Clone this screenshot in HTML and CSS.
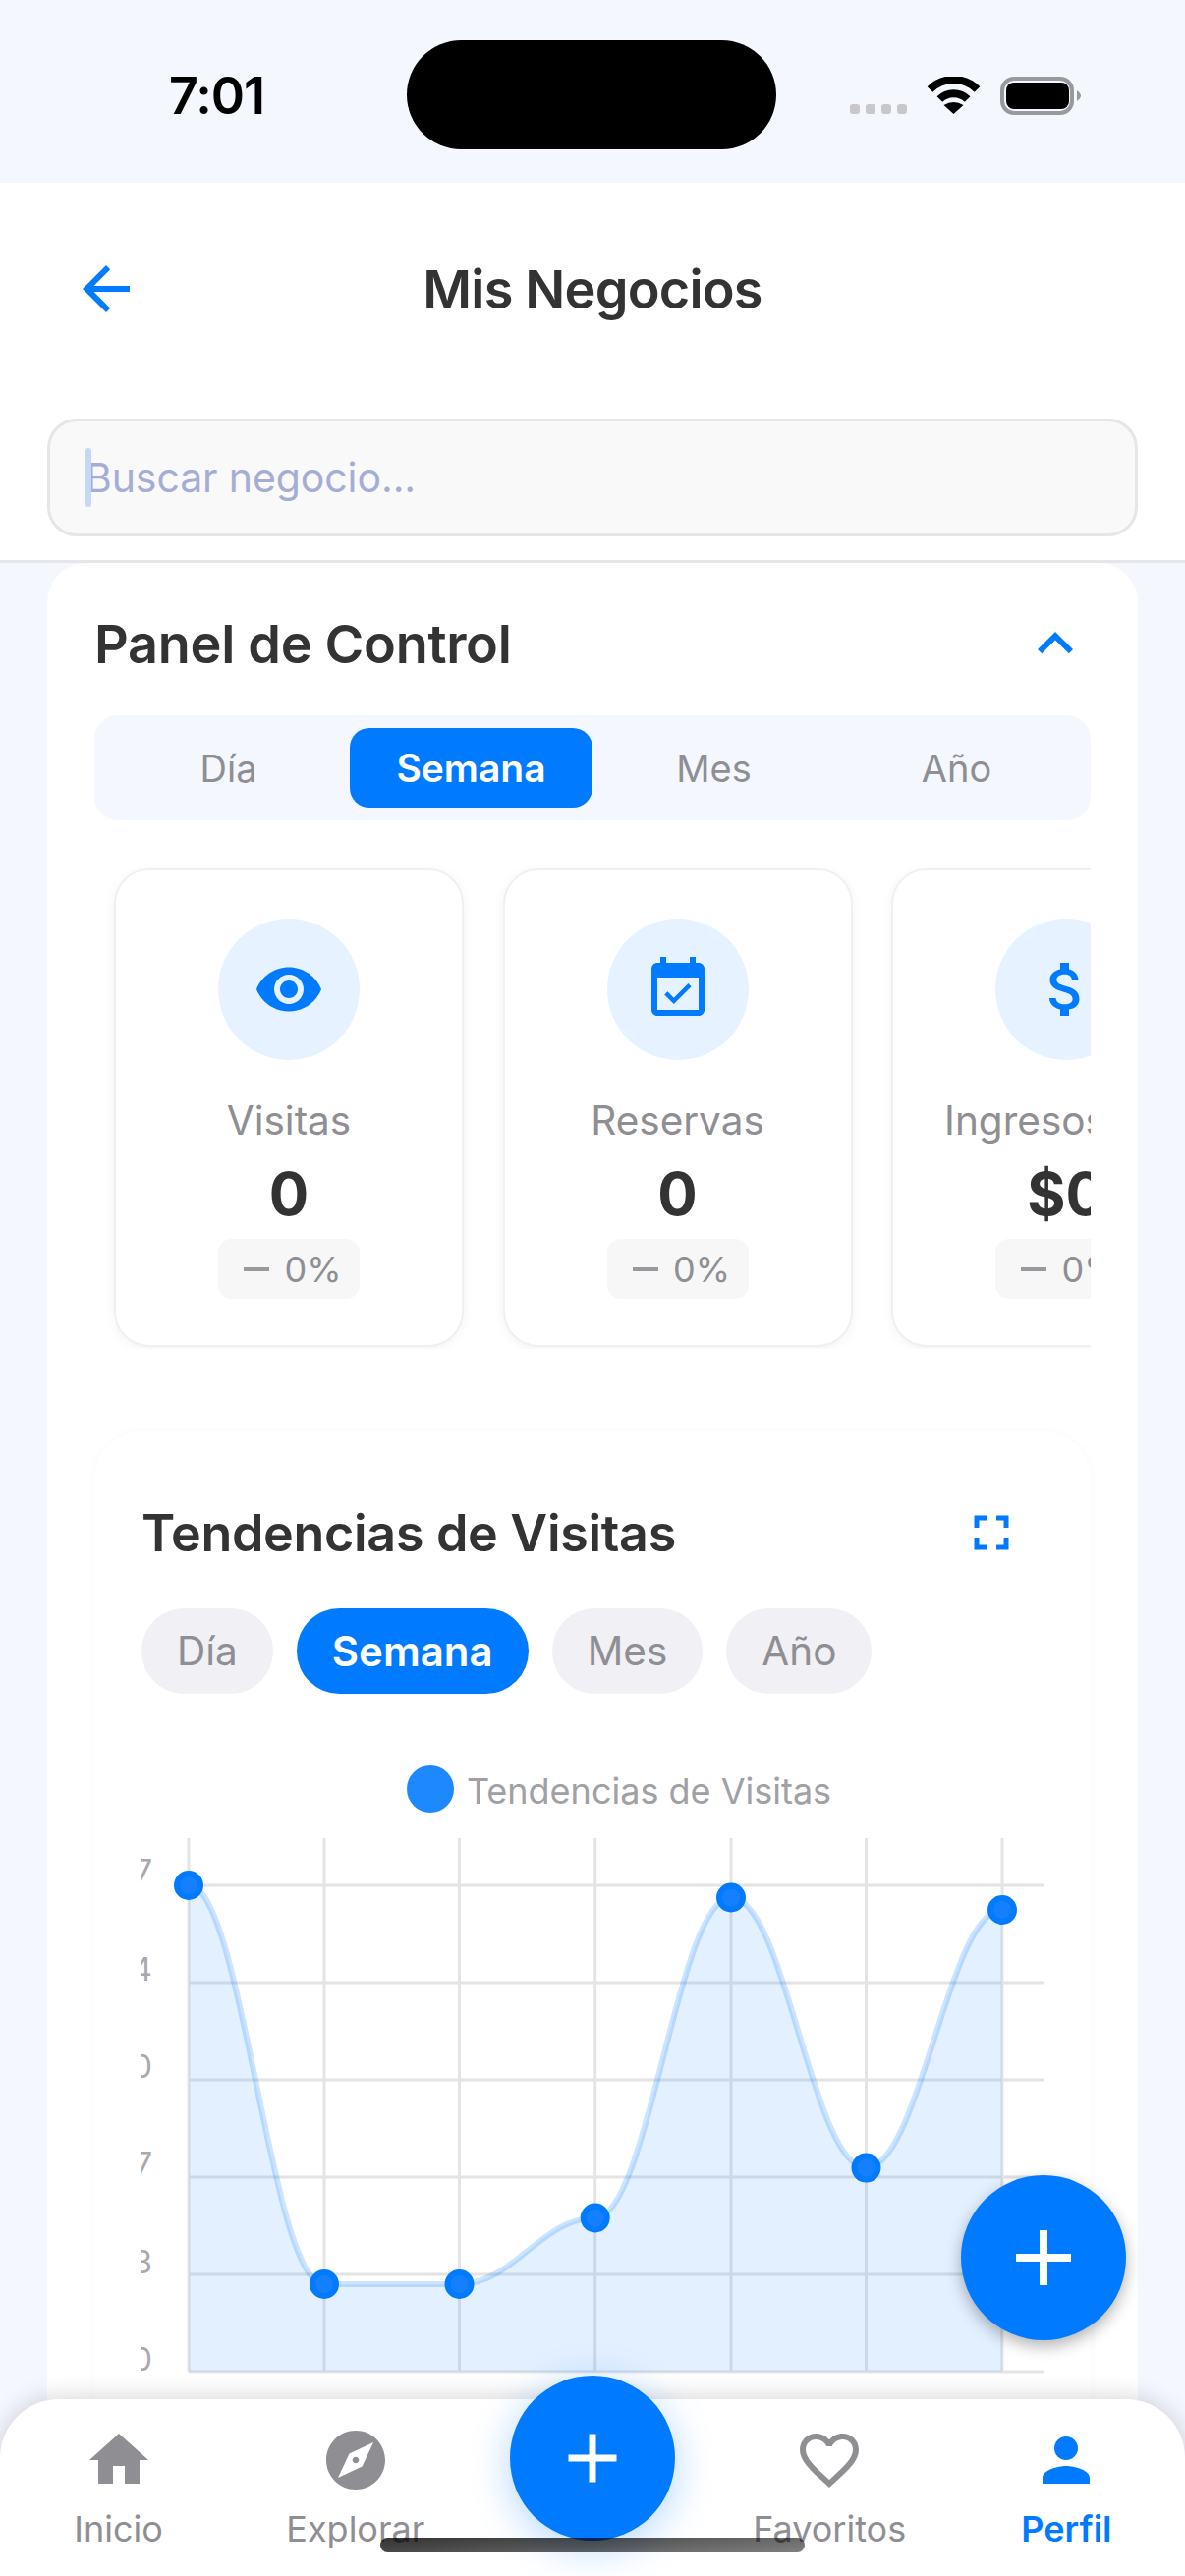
FILE: index.html
```html
<!DOCTYPE html>
<html lang="es">
<head>
<meta charset="utf-8">
<title>Mis Negocios</title>
<link rel="stylesheet" href="styles.css">
</head>
<body>
<div class="screen">
  <div class="status">
    <div class="time">7:01</div>
    <div class="island"></div>
    <svg class="status-icons" width="236" height="40" viewBox="0 0 236 40">
      <g fill="#C7C7CC"><rect x="0" y="28" width="10" height="10" rx="3"/><rect x="16" y="28" width="10" height="10" rx="3"/><rect x="32" y="28" width="10" height="10" rx="3"/><rect x="48" y="28" width="10" height="10" rx="3"/></g>
      <g fill="none" stroke="#000" stroke-width="8"><path d="M81.500 13A34 34 0 0 1 129.500 13"/><path d="M91.400 23A20 20 0 0 1 119.600 23"/></g>
      <path d="M105.500 38L95.500 29Q105.500 23 115.500 29Z"/>
      <rect x="155" y="2" width="71" height="35" rx="12" fill="none" stroke="#98989F" stroke-width="4"/>
      <rect x="159" y="6" width="64" height="27" rx="8"/>
      <path d="M231 14Q235 17 235 19.500Q235 22 231 25Z" fill="#98989F"/>
    </svg>
  </div>

  <header class="header">
    <div class="title-row">
      <svg class="back" viewBox="0 0 24 24" width="72" height="72"><path fill="#007AFF" d="M20 11H7.830l5.590-5.590L12 4l-8 8 8 8 1.410-1.410L7.830 13H20v-2z"/></svg>
      <h1 class="page-title">Mis Negocios</h1>
    </div>
    <div class="search"><span class="caret"></span><span class="placeholder">Buscar negocio...</span></div>
  </header>

  <main class="panel">
    <div class="panel-head">
      <h2 class="panel-title">Panel de Control</h2>
      <svg viewBox="0 0 24 24" width="72" height="72"><path fill="#007AFF" d="M7.410 15.410L12 10.830l4.590 4.580L18 14l-6-6-6 6z"/></svg>
    </div>
    <div class="tabs">
      <div class="tab">Día</div>
      <div class="tab tab-on">Semana</div>
      <div class="tab">Mes</div>
      <div class="tab">Año</div>
    </div>
    <div class="stats">
      <div class="stat">
        <div class="stat-icon"><svg viewBox="0 0 24 24" width="72" height="72"><path fill="#007AFF" d="M12 4.500C7 4.500 2.730 7.610 1 12c1.730 4.390 6 7.500 11 7.500s9.270-3.110 11-7.500c-1.730-4.390-6-7.500-11-7.500zM12 17c-2.760 0-5-2.240-5-5s2.240-5 5-5 5 2.240 5 5-2.240 5-5 5zm0-8c-1.660 0-3 1.340-3 3s1.340 3 3 3 3-1.340 3-3-1.340-3-3-3z"/></svg></div>
        <div class="stat-label">Visitas</div>
        <div class="stat-value">0</div>
        <div class="stat-change"><span class="dash"></span><span>0%</span></div>
      </div>
      <div class="stat">
        <div class="stat-icon"><svg viewBox="0 0 24 24" width="72" height="72"><path fill="#007AFF" d="M16.530 11.060L15.470 10l-4.880 4.880-2.120-2.120-1.060 1.060L10.590 17l5.940-5.940zM19 3h-1V1h-2v2H8V1H6v2H5c-1.110 0-1.990.9-1.990 2L3 19c0 1.100.89 2 2 2h14c1.100 0 2-.9 2-2V5c0-1.100-.9-2-2-2zm0 16H5V8h14v11z"/></svg></div>
        <div class="stat-label">Reservas</div>
        <div class="stat-value">0</div>
        <div class="stat-change"><span class="dash"></span><span>0%</span></div>
      </div>
      <div class="stat">
        <div class="stat-icon"><svg viewBox="0 0 24 24" width="72" height="72"><path fill="#007AFF" d="M11.800 10.900c-2.270-.59-3-1.200-3-2.150 0-1.090 1.010-1.850 2.700-1.850 1.780 0 2.440.85 2.500 2.100h2.210c-.07-1.720-1.120-3.300-3.210-3.810V3h-3v2.160c-1.940.42-3.500 1.680-3.500 3.610 0 2.310 1.910 3.460 4.700 4.130 2.500.6 3 1.480 3 2.410 0 .69-.49 1.790-2.700 1.790-2.060 0-2.870-.92-2.980-2.100h-2.200c.12 2.190 1.760 3.420 3.680 3.830V21h3v-2.150c1.950-.37 3.500-1.500 3.500-3.550 0-2.840-2.430-3.810-4.700-4.400z"/></svg></div>
        <div class="stat-label stat-label-long">Ingresos</div>
        <div class="stat-value">$0</div>
        <div class="stat-change"><span class="dash"></span><span>0%</span></div>
      </div>
    </div>

    <section class="chart-card">
      <div class="chart-head">
        <h2 class="chart-title">Tendencias de Visitas</h2>
        <svg class="expand" viewBox="0 0 24 24" width="60" height="60"><path fill="#007AFF" d="M7 14H5v5h5v-2H7v-3zm-2-4h2V7h3V5H5v5zm12 7h-3v2h5v-5h-2v3zM14 5v2h3v3h2V5h-5z"/></svg>
      </div>
      <div class="pills">
        <div class="pill">Día</div>
        <div class="pill pill-on">Semana</div>
        <div class="pill">Mes</div>
        <div class="pill">Año</div>
      </div>
      <div class="legend"><span class="legend-dot"></span><span class="legend-text">Tendencias de Visitas</span></div>
      <svg class="chart" width="918" height="570" viewBox="144 1860 918 570">
        <g class="grid">
          <path d="M192 1919H1062M192 2018H1062M192 2117H1062M192 2216H1062M192 2315H1062M192 2414H1062"/>
          <path d="M192 1871V2414M330 1871V2414M467.500 1871V2414M605.700 1871V2414M744 1871V2414M881.500 1871V2414M1020 1871V2414"/>
        </g>
        <g class="ticks">
          <text x="155" y="1916">7</text>
          <text x="155" y="2016">4</text>
          <text x="155" y="2115">0</text>
          <text x="155" y="2214">7</text>
          <text x="155" y="2314">3</text>
          <text x="155" y="2413">0</text>
        </g>
        <path class="area" d="M192 1919C247 1919 275 2325 330 2325L467.500 2325C522.500 2325 550.700 2257.500 605.700 2257.500C660.700 2257.500 689 1931.500 744 1931.500C799 1931.500 826.500 2206.600 881.500 2206.600C936.500 2206.600 965 1944 1020 1944V2414H192Z"/>
        <path class="line" d="M192 1919C247 1919 275 2325 330 2325L467.500 2325C522.500 2325 550.700 2257.500 605.700 2257.500C660.700 2257.500 689 1931.500 744 1931.500C799 1931.500 826.500 2206.600 881.500 2206.600C936.500 2206.600 965 1944 1020 1944"/>
        <g class="dots">
          <circle cx="192" cy="1919" r="12"/><circle cx="330" cy="2325" r="12"/><circle cx="467.500" cy="2325" r="12"/><circle cx="605.700" cy="2257.500" r="12"/><circle cx="744" cy="1931.500" r="12"/><circle cx="881.500" cy="2206.600" r="12"/><circle cx="1020" cy="1944" r="12"/>
        </g>
      </svg>
    </section>
  </main>

  <button class="fab"><svg viewBox="0 0 24 24" width="96" height="96"><path fill="#fff" d="M19 13h-6v6h-2v-6H5v-2h6V5h2v6h6v2z"/></svg></button>

  <nav class="nav">
    <div class="nav-item">
      <svg viewBox="0 0 24 24" width="72" height="72"><path d="M10 20v-6h4v6h5v-8h3L12 3 2 12h3v8z"/></svg>
      <span class="nav-label">Inicio</span>
    </div>
    <div class="nav-item">
      <svg viewBox="0 0 24 24" width="72" height="72"><path d="M12 10.900c-.61 0-1.100.49-1.100 1.100s.49 1.100 1.100 1.100c.61 0 1.100-.49 1.100-1.100s-.49-1.100-1.100-1.100zM12 2C6.480 2 2 6.480 2 12s4.480 10 10 10 10-4.480 10-10S17.520 2 12 2zm2.190 12.190L6 18l3.810-8.190L18 6l-3.810 8.190z"/></svg>
      <span class="nav-label">Explorar</span>
    </div>
    <div class="nav-item">
      <button class="nav-add"><svg viewBox="0 0 24 24" width="84" height="84"><path fill="#fff" d="M19 13h-6v6h-2v-6H5v-2h6V5h2v6h6v2z"/></svg></button>
    </div>
    <div class="nav-item">
      <svg viewBox="0 0 24 24" width="72" height="72"><path d="M16.500 3c-1.740 0-3.410.81-4.500 2.090C10.910 3.810 9.240 3 7.500 3 4.420 3 2 5.420 2 8.500c0 3.780 3.400 6.860 8.550 11.540L12 21.350l1.450-1.320C18.600 15.360 22 12.280 22 8.500 22 5.420 19.580 3 16.500 3zm-4.400 15.550l-.1.1-.1-.1C7.140 14.240 4 11.390 4 8.500 4 6.500 5.500 5 7.500 5c1.540 0 3.040.99 3.570 2.360h1.870C13.460 5.990 14.960 5 16.500 5c2 0 3.500 1.500 3.500 3.500 0 2.890-3.140 5.740-7.900 10.050z"/></svg>
      <span class="nav-label">Favoritos</span>
    </div>
    <div class="nav-item nav-active">
      <svg viewBox="0 0 24 24" width="72" height="72"><path d="M12 12c2.210 0 4-1.790 4-4s-1.790-4-4-4-4 1.790-4 4 1.790 4 4 4zm0 2c-2.670 0-8 1.340-8 4v2h16v-2c0-2.660-5.330-4-8-4z"/></svg>
      <span class="nav-label">Perfil</span>
    </div>
  </nav>
  <div class="home-bar"></div>
</div>
</body>
</html>
```

FILE: styles.css
```css
* { box-sizing: border-box; }
html, body { margin: 0; padding: 0; }
body { font-family: Inter, "Liberation Sans", sans-serif; color: #333; }
h1, h2 { margin: 0; }
button { border: 0; padding: 0; font: inherit; }

.screen {
  position: relative;
  width: 1206px;
  height: 2622px;
  overflow: hidden;
  background: #F4F7FE;
}

/* status bar */
.status {
  height: 186px;
  padding-top: 7px;
  display: flex;
  align-items: center;
}
.time {
  width: 414px;
  padding-left: 172px;
  padding-top: 2px;
  font-size: 52px;
  font-weight: 600;
  letter-spacing: -1px;
  color: #000;
}
.island {
  width: 376px;
  height: 111px;
  border-radius: 56px;
  background: #000;
}
.status-icons { margin-left: 75px; margin-top: 3px; }

/* header */
.header {
  background: #fff;
  border-bottom: 3px solid #E5E5EA;
  padding-bottom: 24px;
}
.title-row {
  position: relative;
  height: 240px;
  padding-bottom: 24px;
  display: flex;
  align-items: center;
  justify-content: center;
}
.back { position: absolute; left: 72px; top: 72px; }
.page-title { font-size: 54px; font-weight: 600; letter-spacing: -0.8px; }
.search {
  position: relative;
  height: 120px;
  margin: 0 48px;
  padding-left: 36px;
  display: flex;
  align-items: center;
  background: #F9F9F9;
  border: 3px solid #E5E5EA;
  border-radius: 30px;
}
.caret {
  position: absolute;
  left: 36px;
  top: 27px;
  width: 6px;
  height: 60px;
  border-radius: 3px;
  background: #C6D6F6;
}
.placeholder { font-size: 41px; letter-spacing: -0.1px; color: #A5ADD4; }

/* panel */
.panel {
  margin: 0 48px;
  padding: 0 48px;
  height: 2100px;
  background: #fff;
  border-radius: 40px 40px 0 0;
}
.panel-head {
  height: 155px;
  padding-top: 9px;
  display: flex;
  align-items: center;
  justify-content: space-between;
}
.panel-title { font-size: 54px; font-weight: 600; letter-spacing: -0.3px; }
.tabs {
  height: 107px;
  padding: 13px;
  display: flex;
  background: #F4F7FE;
  border-radius: 24px;
}
.tab {
  flex: 1;
  display: flex;
  align-items: center;
  justify-content: center;
  font-size: 38px;
  color: #8E8E93;
  border-radius: 20px;
}
.tab-on { background: #007AFF; color: #fff; font-weight: 600; font-size: 39px; }

.stats {
  margin-top: 45px;
  padding: 4px 0 2px 20px;
  display: flex;
  gap: 39.500px;
  overflow: hidden;
}
.stat {
  flex: none;
  width: 356px;
  height: 487px;
  padding-top: 49px;
  display: flex;
  flex-direction: column;
  align-items: center;
  background: #fff;
  border: 2px solid #F0F0F0;
  border-radius: 36px;
  box-shadow: 0 2px 12px rgba(0, 0, 0, .05);
}
.stat-icon {
  width: 144px;
  height: 144px;
  flex: none;
  display: flex;
  align-items: center;
  justify-content: center;
  border-radius: 50%;
  background: #E6F2FF;
}
.stat-label { margin-top: 37px; font-size: 40.500px; line-height: 50px; color: #8E8E93; white-space: nowrap; }
.stat-label-long { margin-right: 83px; }
.stat-value { margin-top: 13px; font-size: 60px; line-height: 72px; font-weight: 700; }
.stat-change {
  margin-top: 10px;
  width: 144px;
  height: 61px;
  padding-left: 8px;
  display: flex;
  align-items: center;
  justify-content: center;
  gap: 15px;
  font-size: 36px;
  color: #8E8E93;
  background: #F7F7F7;
  border-radius: 14px;
  white-space: nowrap;
}
.dash { width: 26px; height: 4px; background: #98989D; flex: none; }

/* chart */
.chart-card {
  margin-top: 84px;
  padding: 0 48px;
  height: 1200px;
  background: #fff;
  border-radius: 48px;
  box-shadow: 0 0 8px rgba(0, 0, 0, .03);
}
.chart-head {
  height: 180px;
  padding-top: 26px;
  display: flex;
  align-items: center;
  justify-content: space-between;
}
.chart-title { font-size: 52px; font-weight: 600; letter-spacing: -0.3px; }
.expand { margin-right: 23px; }
.pills { display: flex; gap: 24px; }
.pill {
  height: 87px;
  padding: 0 36px;
  display: flex;
  align-items: center;
  font-size: 40.500px;
  color: #8E8E93;
  background: #F0F0F5;
  border-radius: 44px;
}
.pill-on { background: #007AFF; color: #fff; font-weight: 600; font-size: 42px; }
.legend {
  margin-top: 73px;
  padding-left: 54px;
  display: flex;
  align-items: center;
  justify-content: center;
  gap: 13px;
}
.legend-dot { width: 48px; height: 48px; border-radius: 50%; background: #1E88FF; }
.legend-text { padding-top: 4px; font-size: 36px; color: #A0A0A5; }
.chart { display: block; margin-top: 15px; }
.grid path { fill: none; stroke: #E4E4E4; stroke-width: 3; }
.ticks text { font-size: 32px; fill: #A8A8AD; text-anchor: end; }
.area { fill: rgba(0, 122, 255, .11); }
.line { fill: none; stroke: rgba(0, 122, 255, .2); stroke-width: 6; }
.dots circle { fill: #1580FF; stroke: #007AFF; stroke-width: 6; }

/* floating */
.fab {
  position: absolute;
  left: 978px;
  top: 2214px;
  width: 168px;
  height: 168px;
  display: flex;
  align-items: center;
  justify-content: center;
  border-radius: 50%;
  background: #007AFF;
  box-shadow: 0 6px 16px rgba(0, 0, 0, .3);
}

/* bottom nav */
.nav {
  position: absolute;
  left: 0;
  right: 0;
  bottom: 0;
  height: 180px;
  display: flex;
  background: #fff;
  border-radius: 60px 60px 0 0;
  box-shadow: 0 -2px 24px rgba(0, 0, 0, .16);
}
.nav-item {
  position: relative;
  flex: 1;
  padding-top: 26px;
  display: flex;
  flex-direction: column;
  align-items: center;
}
.nav-item svg path { fill: #8E8E93; }
.nav-item .nav-add svg path { fill: #fff; }
.nav-label { margin-top: 12px; font-size: 36px; line-height: 44px; color: #8E8E93; white-space: nowrap; }
.nav-active svg path { fill: #007AFF; }
.nav-active .nav-label { color: #007AFF; font-weight: 600; }
.nav-add {
  position: absolute;
  left: 36.600px;
  top: -24px;
  width: 168px;
  height: 168px;
  display: flex;
  align-items: center;
  justify-content: center;
  border-radius: 50%;
  background: #007AFF;
  box-shadow: 0 8px 40px rgba(0, 122, 255, .3);
}
.home-bar {
  position: absolute;
  left: 387px;
  top: 2583px;
  width: 432px;
  height: 15px;
  border-radius: 8px;
  background: linear-gradient(175deg, rgba(0, 0, 0, .8), rgba(0, 0, 0, .5));
}
```
